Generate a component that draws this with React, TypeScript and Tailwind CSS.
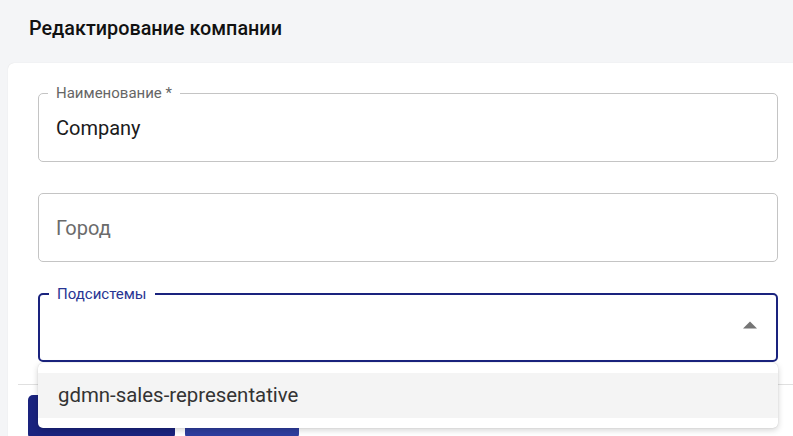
const font = { fontFamily: 'Roboto, "Noto Sans", sans-serif' };

function OutlinedField({
    label,
    value,
    placeholder,
    focused,
    children,
}: {
    label?: string;
    value?: string;
    placeholder?: string;
    focused?: boolean;
    children?: React.ReactNode;
}) {
    return (
        <div
            className={
                'relative flex h-[69px] w-[740px] items-center rounded-[5px] ' +
                (focused ? 'border-2 border-[#1a237e] pl-[16px]' : 'border border-[#c4c4c4] pl-[17px]')
            }
        >
            {label && (
                <span
                    className={
                        'absolute left-[9px] top-[-9px] bg-white px-[8px] text-[15px] leading-[16px] ' +
                        (focused ? 'text-[#283593]' : 'text-[#666666]')
                    }
                >
                    {label}
                </span>
            )}
            {value && <span className="text-[20px] text-[#1b1b1b]">{value}</span>}
            {placeholder && <span className="text-[20px] text-[#6b6b6b]">{placeholder}</span>}
            {children}
        </div>
    );
}

export default function App() {
    return (
        <div className="h-[436px] w-[793px] overflow-hidden bg-[#f4f5f7]" style={font}>
            <div className="flex h-[63px] items-center pl-[29px] pb-[6px]">
                <h1 className="text-[19.8px] font-medium text-[#111111]">Редактирование компании</h1>
            </div>
            <div className="relative ml-[8px] w-[800px] rounded-tl-[6px] bg-white pt-[30px] shadow-[0_0_1px_rgba(0,0,0,0.15)]">
                <div className="flex flex-col gap-[31px] px-[30px]">
                    <OutlinedField label="Наименование *" value="Company" />
                    <OutlinedField placeholder="Город" />
                    <div className="relative">
                        <OutlinedField label="Подсистемы" focused>
                            <svg
                                className="absolute right-[19px] top-[26px]"
                                width="14"
                                height="8"
                                viewBox="0 0 14 8"
                            >
                                <polygon points="0,7.5 7,0.5 14,7.5" fill="#757575" />
                            </svg>
                        </OutlinedField>
                        <div className="absolute left-0 top-[70px] z-10 w-[740px] rounded-[5px] bg-white py-[10px] shadow-[0_2px_6px_rgba(0,0,0,0.18),0_0_1px_rgba(0,0,0,0.2)]">
                            <div className="flex h-[45px] items-center bg-[#f4f4f4] pl-[20px] text-[20.4px] text-[#333333]">
                                gdmn-sales-representative
                            </div>
                        </div>
                    </div>
                </div>
                <div className="mx-[10px] mt-[22px] h-px bg-[#e0e0e0]" />
                <div className="flex gap-[10px] px-[20px] pt-[10px]">
                    <button className="h-[44px] w-[147px] rounded-[5px] bg-[#1a237e] text-[16px] font-medium text-white">
                        Сохранить
                    </button>
                    <button className="h-[44px] w-[114px] rounded-[5px] bg-[#2e3d9e] text-[16px] font-medium text-white">
                        Отмена
                    </button>
                </div>
            </div>
        </div>
    );
}
